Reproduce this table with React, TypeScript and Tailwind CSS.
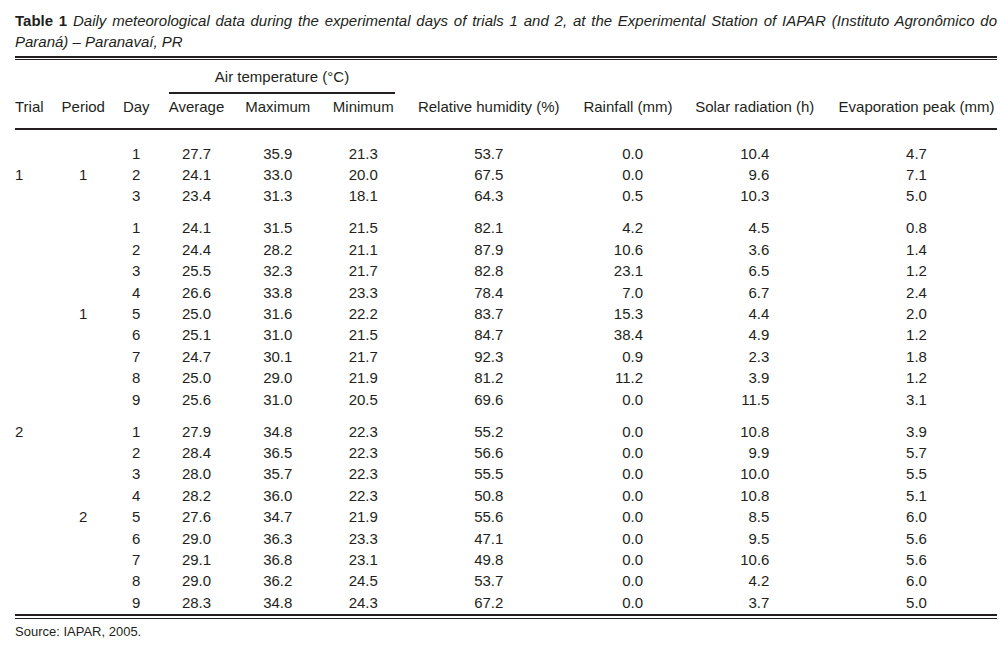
const cols =
  "grid grid-cols-[38px_60.5px_45.5px_75px_87.5px_83.5px_167.5px_111px_142.5px_171px]";

type Row = { trial?: string; period?: string; v: string[] };

const groups: Row[][] = [
  [
    { v: ["1", "27.7", "35.9", "21.3", "53.7", "0.0", "10.4", "4.7"] },
    { trial: "1", period: "1", v: ["2", "24.1", "33.0", "20.0", "67.5", "0.0", "9.6", "7.1"] },
    { v: ["3", "23.4", "31.3", "18.1", "64.3", "0.5", "10.3", "5.0"] },
  ],
  [
    { v: ["1", "24.1", "31.5", "21.5", "82.1", "4.2", "4.5", "0.8"] },
    { v: ["2", "24.4", "28.2", "21.1", "87.9", "10.6", "3.6", "1.4"] },
    { v: ["3", "25.5", "32.3", "21.7", "82.8", "23.1", "6.5", "1.2"] },
    { v: ["4", "26.6", "33.8", "23.3", "78.4", "7.0", "6.7", "2.4"] },
    { period: "1", v: ["5", "25.0", "31.6", "22.2", "83.7", "15.3", "4.4", "2.0"] },
    { v: ["6", "25.1", "31.0", "21.5", "84.7", "38.4", "4.9", "1.2"] },
    { v: ["7", "24.7", "30.1", "21.7", "92.3", "0.9", "2.3", "1.8"] },
    { v: ["8", "25.0", "29.0", "21.9", "81.2", "11.2", "3.9", "1.2"] },
    { v: ["9", "25.6", "31.0", "20.5", "69.6", "0.0", "11.5", "3.1"] },
  ],
  [
    { trial: "2", v: ["1", "27.9", "34.8", "22.3", "55.2", "0.0", "10.8", "3.9"] },
    { v: ["2", "28.4", "36.5", "22.3", "56.6", "0.0", "9.9", "5.7"] },
    { v: ["3", "28.0", "35.7", "22.3", "55.5", "0.0", "10.0", "5.5"] },
    { v: ["4", "28.2", "36.0", "22.3", "50.8", "0.0", "10.8", "5.1"] },
    { period: "2", v: ["5", "27.6", "34.7", "21.9", "55.6", "0.0", "8.5", "6.0"] },
    { v: ["6", "29.0", "36.3", "23.3", "47.1", "0.0", "9.5", "5.6"] },
    { v: ["7", "29.1", "36.8", "23.1", "49.8", "0.0", "10.6", "5.6"] },
    { v: ["8", "29.0", "36.2", "24.5", "53.7", "0.0", "4.2", "6.0"] },
    { v: ["9", "28.3", "34.8", "24.3", "67.2", "0.0", "3.7", "5.0"] },
  ],
];

function DataRow({ row }: { row: Row }) {
  const [day, avg, max, min, rh, rain, solar, evap] = row.v;
  return (
    <div className={`${cols} h-[21.4px] leading-[21.4px]`}>
      <div>{row.trial}</div>
      <div className="text-center">{row.period}</div>
      <div className="text-center">{day}</div>
      <div className="text-center">{avg}</div>
      <div className="text-center">{max}</div>
      <div className="text-center">{min}</div>
      <div className="text-center">{rh}</div>
      <div className="text-center">
        <span className="inline-block w-[30px] text-right">{rain}</span>
      </div>
      <div className="text-center">
        <span className="inline-block w-[29px] text-right">{solar}</span>
      </div>
      <div className="pl-[10px] text-center">{evap}</div>
    </div>
  );
}

export default function App() {
  return (
    <div className="min-h-screen bg-white text-[#231f20] font-['Liberation_Sans',Arial,sans-serif]">
      <div className="ml-[15px] w-[982px] pt-[10px]">
        <div className="text-[15px] leading-[21px]">
          <div className="text-justify [text-align-last:justify]">
            <span className="font-bold">Table 1</span>{" "}
            <span className="italic">
              Daily meteorological data during the experimental days of trials 1 and 2, at the
              Experimental Station of IAPAR (Instituto Agronômico do
            </span>
          </div>
          <div className="italic">Paraná) – Paranavaí, PR</div>
        </div>

        <div className="mt-[4px] h-[4px] border-t-2 border-b border-[#231f20]" />

        <div className="text-[15px] leading-[22px]">
          <div className={`${cols} mt-[6px]`}>
            <div className="col-start-4 col-span-3 text-center">
              Air temperature (°C)
              <div className="mx-[10px] mt-[4px] border-t-2 border-[#231f20]" />
            </div>
          </div>
          <div className={`${cols} mt-[2px]`}>
            <div>Trial</div>
            <div className="text-center">Period</div>
            <div className="text-center">Day</div>
            <div className="text-center">Average</div>
            <div className="text-center">Maximum</div>
            <div className="text-center">Minimum</div>
            <div className="text-center">Relative humidity (%)</div>
            <div className="text-center">Rainfall (mm)</div>
            <div className="text-center">Solar radiation (h)</div>
            <div className="pl-[10px] text-center">Evaporation peak (mm)</div>
          </div>
        </div>

        <div className="mt-[10px] border-t-2 border-[#231f20]" />

        <div className="pt-[12.6px] text-[15px]">
          {groups.map((g, gi) => (
            <div key={gi} className={gi > 0 ? "mt-[10.7px]" : ""}>
              {g.map((r, ri) => (
                <DataRow key={ri} row={r} />
              ))}
            </div>
          ))}
        </div>

        <div className="mt-[0.6px] h-[5px] border-t-2 border-b border-[#231f20]" />

        <p className="mt-[5px] text-[13px] leading-[16px]">Source: IAPAR, 2005.</p>
      </div>
    </div>
  );
}
